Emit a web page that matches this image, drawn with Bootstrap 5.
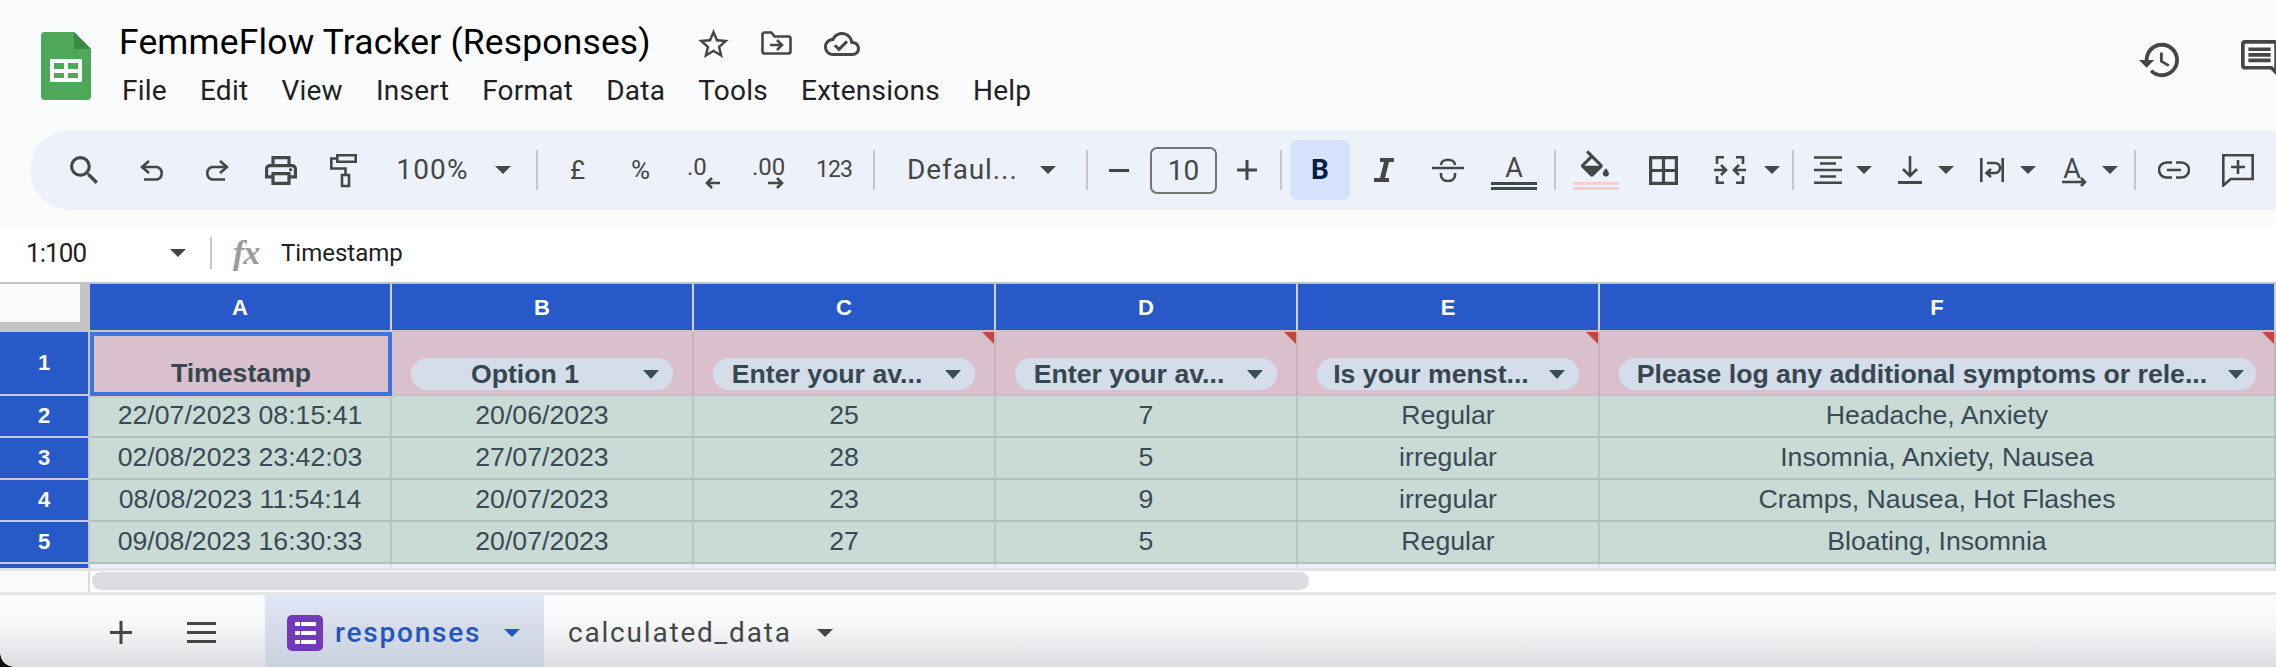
<!DOCTYPE html>
<html lang="en">
<head>
<meta charset="utf-8">
<title>FemmeFlow Tracker (Responses)</title>
<link href="https://cdn.jsdelivr.net/npm/bootstrap@5.3.0/dist/css/bootstrap.min.css" rel="stylesheet">
<style>
html,body{margin:0;width:2276px;height:668px;overflow:hidden;background:#fff;font-family:Roboto,"Liberation Sans",sans-serif;color:#444746}
svg{display:block;flex:none}
.ic{fill:#444746}
.st{fill:none;stroke:#444746;stroke-width:2.6}
.top-area{background:#f9fbfd;height:226px}
.head-row{height:130px;padding:32px 0 0 41px}
.doc-col{margin-left:31px;margin-top:-10px}
.doc-title{font-size:35.4px;line-height:40px;color:#000;white-space:nowrap;margin:0 47px 0 -3px;letter-spacing:.2px}
.doc-icons{gap:32px;margin-top:3px}
.menu-row{gap:33px;font-size:28px;line-height:32px;color:#202124;margin-top:13px;letter-spacing:.25px}
.right-icons{margin-left:auto;margin-top:8px;gap:62px;margin-right:-2px}
.tool-pill{height:80px;margin-left:30px;background:#edf2fa;border-radius:40px 0 0 40px}
.sep{width:2px;height:40px;background:#c7c7c7;flex:none}
.tt{font-size:28px;line-height:32px;color:#444746;text-align:center;flex:none;white-space:nowrap}
.tt-zoom{width:73px;letter-spacing:1.2px}.tt-font{width:105px;letter-spacing:.9px}
.tt-sm{font-size:26px}
.tt-cur{width:13px}.tt-pct{width:21px}.tt-123{width:36px;letter-spacing:-1px;font-size:23px}
.size-box{width:67px;height:47px;border:2px solid #757575;border-radius:7px;line-height:43px}
.bold-btn{width:60px;height:60px;background:#d6e2fb;border-radius:8px;font-weight:700;color:#041e49;line-height:60px}
.caret{width:16px;height:8px;flex:none;border-left:8px solid transparent;border-right:8px solid transparent;border-top:8px solid #444746;box-sizing:border-box}
.sp8{margin-left:8px}.sp12{margin-left:12px}.sp14{margin-left:14px}.sp15{margin-left:15px}.sp16{margin-left:16px}.sp17{margin-left:17px}.sp18{margin-left:18px}.sp20{margin-left:20px}.sp21{margin-left:21px}.sp22{margin-left:22px}.sp23{margin-left:23px}.sp24{margin-left:24px}.sp25{margin-left:25px}.sp26{margin-left:26px}.sp27{margin-left:27px}.sp28{margin-left:28px}.sp30{margin-left:30px}.sp31{margin-left:31px}.sp32{margin-left:32px}.sp33{margin-left:33px}.sp36{margin-left:36px}.sp38{margin-left:38px}.sp39{margin-left:39px}.sp40{margin-left:40px}.sp42{margin-left:42px}.sp47{margin-left:47px}.sp55{margin-left:55px}
.fx-row{height:56px;background:#fff;padding:0 0 2px 26px}
.name-box{width:160px;font-size:26px;color:#202124;line-height:30px;letter-spacing:-.9px}
.fx-sep{width:2px;height:32px;background:#c7c7c7;margin-left:24px}
.fx-mark{font-family:"Liberation Serif",serif;font-style:italic;font-weight:700;font-size:34px;line-height:30px;color:#9b9b9b;margin-left:21px;width:48px;letter-spacing:-1px}
.fx-text{font-size:24px;line-height:30px;color:#202124}
.sheet-grid{display:grid;grid-template-columns:90px 302px 302px 302px 302px 302px 676px;grid-template-rows:48px 64px 42px 42px 42px 42px 4px;border-top:2px solid #c2c2c2;font-family:"Liberation Sans",Arial,sans-serif;font-size:26.67px;color:#384a56}
.corner-cell{background:#c4c4c4;padding:0 10px 10px 0}
.corner-cell>div{background:#f8f9fa;height:100%}
.col-head{background:#2759c8;color:#fff;font-weight:700;font-size:22px;border-right:2px solid #ccd2dc;border-bottom:2px solid #c4c4c4;display:flex;align-items:center;justify-content:center}
.row-head{background:#2759c8;color:#fff;font-weight:700;font-size:22px;border-right:2px solid #c4c4c4;border-bottom:2px solid #c4cbd6;display:flex;align-items:center;justify-content:center;padding-bottom:2px}
.pink-cell{background:#dac0cd;border-right:2px solid #c6b3bd;border-bottom:2px solid #c9bcc4;position:relative;display:flex;align-items:flex-end;justify-content:center;padding-bottom:4px;font-weight:700;white-space:nowrap;color:#35474f}
.sel-cell{box-shadow:inset 0 0 0 4px #3d74e0;border-color:transparent;margin:0 -2px -2px 0;padding-bottom:5px;z-index:2;line-height:36px}
.note-mark{position:absolute;top:0;right:0;width:12px;height:12px;background:#c5443f;clip-path:polygon(0 0,100% 0,100% 100%)}
.filter-chip{height:32px;margin:0 19px;width:262px;background:#d5dcea;border-radius:16px;padding:0 12px 0 16px;line-height:32px}
.filter-wide{width:638px}
.chip-label{width:196px;text-align:center;flex:none;margin-right:20px}
.chip-label-wide{width:575px;margin-right:18px}
.chip-caret{border-top-color:#3b4d58;border-left-width:8px;border-right-width:8px;border-top-width:9px;height:9px}
.data-cell{background:#cadbd5;border-right:2px solid #b6c6c2;border-bottom:2px solid #b0c0bf;display:flex;align-items:center;justify-content:center;white-space:nowrap;padding-bottom:2px}
.spare-cell{background:#e8effb;border-right:2px solid #d7dde6}
.spare-head{background:#2759c8;border-right:2px solid #c4c4c4}
.scroll-strip{height:24px;border-top:3px solid #e3e3e3;background:#fff}
.scroll-left{width:90px;background:#f9fafb;border-right:2px solid #dcdcdc}
.scroll-thumb{width:1217px;height:18px;background:#dadce0;border-radius:9px;margin:1px 0 0 2px}
.tab-bar{height:75px;border-top:3px solid #e5e6e7;background:linear-gradient(#f9fafc,#f7f8fa 40%,#dcdee1);position:relative;padding-left:110px}
.corner-nub{position:absolute;left:0;bottom:0;width:14px;height:14px;background:radial-gradient(circle at 100% 0,transparent 13.5px,#111 14px)}
.tab-on{width:279px;height:100%;margin-left:49px;padding:4px 0 0 22px;background:linear-gradient(#e1e7f4,#c9d0de);color:#2356c0;font-weight:500}
.tab-name{font-size:28px;line-height:32px;white-space:nowrap;letter-spacing:1.8px}
.tab-label{margin-left:12px}
.tab-off{margin-left:24px;color:#444746;padding-top:4px}
.caret-blue{border-top-color:#2356c0;margin-left:23px}
.caret-off{margin-left:25px;margin-top:4px}
.tab-tool{margin-top:2px}
</style>
</head>
<body>
<div class="top-area">
  <div class="head-row d-flex">
    <svg width="50" height="68" viewBox="0 0 50 68"><path fill="#4fa85a" d="M4 0H33L50 17V64a4 4 0 0 1-4 4H4a4 4 0 0 1-4-4V4a4 4 0 0 1 4-4z"/><path fill="#3a8a3f" d="M33 0L50 17H33z"/><path fill="#fff" d="M9 27H41V50H9zM13 31V37H23V31zM27 31V37H37V31zM13 41V46H23V41zM27 41V46H37V41z" fill-rule="evenodd"/></svg>
    <div class="doc-col">
      <div class="d-flex align-items-center">
        <div class="doc-title">FemmeFlow Tracker (Responses)</div>
        <div class="d-flex align-items-center doc-icons">
          <svg width="31" height="29" viewBox="2 2 20 19" class="ic"><path d="M22 9.24l-7.19-.62L12 2 9.19 8.63 2 9.24l5.46 4.73L5.82 21 12 17.27 18.18 21l-1.63-7.03L22 9.24zM12 15.4l-3.76 2.27 1-4.28-3.32-2.88 4.38-.38L12 6.1l1.71 4.04 4.38.38-3.32 2.88 1 4.28L12 15.4z"/></svg>
          <svg width="31" height="25" viewBox="762 32 31 25"><path class="st" d="M763.5 36a2 2 0 0 1 2-2.5h7l3 4h14a2 2 0 0 1 2 2v13a2 2 0 0 1-2 2h-24a2 2 0 0 1-2-2z"/><path class="st" d="M771 46h12M778 41l5 5-5 5"/></svg>
          <svg width="36" height="24" viewBox="0 4 24 16" class="ic"><path d="M19.35 10.04C18.67 6.59 15.64 4 12 4 9.11 4 6.6 5.64 5.35 8.04 2.34 8.36 0 10.91 0 14c0 3.31 2.69 6 6 6h13c2.76 0 5-2.24 5-5 0-2.64-2.05-4.78-4.65-4.96zM19 18H6c-2.21 0-4-1.79-4-4 0-2.05 1.53-3.76 3.56-3.97l1.07-.11.5-.95C8.08 7.14 9.94 6 12 6c2.62 0 4.88 1.86 5.39 4.43l.3 1.5 1.53.11c1.56.1 2.78 1.41 2.78 2.96 0 1.65-1.35 3-3 3zm-9-3.82l-2.09-2.09L6.5 13.5 10 17l6.01-6.01-1.41-1.41z"/></svg>
        </div>
      </div>
      <div class="d-flex menu-row"><span>File</span><span>Edit</span><span>View</span><span>Insert</span><span>Format</span><span>Data</span><span>Tools</span><span>Extensions</span><span>Help</span></div>
    </div>
    <div class="d-flex right-icons align-items-start">
      <svg width="40" height="40" viewBox="1 2 21 20" class="ic"><path d="M13 3c-4.97 0-9 4.03-9 9H1l3.89 3.89.07.14L9 12H6c0-3.87 3.13-7 7-7s7 3.13 7 7-3.13 7-7 7c-1.93 0-3.68-.79-4.94-2.06l-1.42 1.42C8.27 19.99 10.51 21 13 21c4.97 0 9-4.03 9-9s-4.03-9-9-9zm-1 5v5l4.28 2.54.72-1.21-3.5-2.08V8H12z"/></svg>
      <svg width="37" height="37" viewBox="2 2 20 20" class="ic"><path d="M20 2H4c-1.1 0-2 .9-2 2v12c0 1.1.9 2 2 2h14l4 4V4c0-1.1-.9-2-2-2zm0 15.17L18.83 16H4V4h16v13.17zM6 12h12v2H6zm0-3h12v2H6zm0-3h12v2H6z"/></svg>
    </div>
  </div>
  <div class="tool-pill d-flex align-items-center">
    <svg class="ic sp40" width="28" height="28" viewBox="3 3 17.5 17.5"><path d="M15.5 14h-.79l-.28-.27A6.471 6.471 0 0 0 16 9.5 6.5 6.5 0 1 0 9.5 16c1.61 0 3.09-.59 4.23-1.57l.27.28v.79l5 4.99L20.49 19l-4.99-5zm-6 0C7.01 14 5 11.99 5 9.5S7.01 5 9.5 5 14 7.01 14 9.5 11.99 14 9.5 14z"/></svg>
    <svg class="sp42" width="25" height="22" viewBox="0 0 25 22"><path class="st" d="M9 2L2 8l7 6M2 8h15a6.500 6.500 0 0 1 0 12.500H4"/></svg>
    <svg class="sp39" width="25" height="22" viewBox="0 0 25 22"><path class="st" d="M16 2l7 6-7 6M23 8H8a6.500 6.500 0 0 0 0 12.500h13"/></svg>
    <svg class="ic sp36" width="32" height="29" viewBox="2 3 20 18"><path d="M19 8h-1V3H6v5H5c-1.66 0-3 1.34-3 3v6h4v4h12v-4h4v-6c0-1.66-1.34-3-3-3zM8 5h8v3H8V5zm8 12v2H8v-4h8v2zm2-2v-2H6v2H4v-4c0-.55.45-1 1-1h14c.55 0 1 .45 1 1v4h-2z"/><circle cx="18" cy="11.500" r="1"/></svg>
    <svg class="sp33" width="28" height="35" viewBox="329 156 28 35"><path class="st" d="M336.300 158.300h18.400v6.400h-18.400zM336 161.500h-5.700v10h14.200v7"/><path class="st" d="M341 178h7v11h-7z"/></svg>
    <div class="tt tt-zoom sp38">100%</div>
    <div class="caret sp26"></div>
    <div class="sep sp25"></div>
    <div class="tt tt-sm tt-cur sp32">£</div>
    <div class="tt tt-sm tt-pct sp47">%</div>
    <svg class="sp36" width="33" height="44" viewBox="687 148 33 44"><text x="687" y="175" font-family="Roboto,sans-serif" font-size="24" fill="#444746">.0</text><path class="st" d="M720 183h-13M712 178l-5 5 5 5"/></svg>
    <svg class="sp32" width="33" height="44" viewBox="752 148 33 44"><text x="752" y="175" font-family="Roboto,sans-serif" font-size="24" fill="#444746">.00</text><path class="st" d="M768 183h14M777 178l5 5-5 5"/></svg>
    <div class="tt tt-sm tt-123 sp31">123</div>
    <div class="sep sp21"></div>
    <div class="tt tt-font sp32">Defaul...</div>
    <div class="caret sp28"></div>
    <div class="sep sp30"></div>
    <svg class="sp21" width="20" height="3" viewBox="0 0 20 3"><path fill="#444746" d="M0 0h20v3H0z"/></svg>
    <div class="tt size-box sp21">10</div>
    <svg class="sp20" width="20" height="20" viewBox="0 0 20 20"><path fill="#444746" d="M8.500 0h3v8.500H20v3h-8.500V20h-3v-8.500H0v-3h8.500z"/></svg>
    <div class="sep sp23"></div>
    <div class="tt bold-btn sp8">B</div>
    <svg class="sp24" width="20" height="24" viewBox="1374 160 20 24"><path fill="#444746" d="M1380 160h14v4h-5l-4 16h4v4h-15v-4h6l4-16h-4z"/></svg>
    <svg class="sp38" width="32" height="24" viewBox="1432 160 32 24"><path class="st" d="M1432 170h32M1441 167c0-7 14-7 14 0M1441 175v2c0 8 14 8 14 0v-2"/></svg>
    <svg class="sp27" width="46" height="40" viewBox="1491 150 46 40"><text x="1514" y="177" text-anchor="middle" font-family="Roboto,sans-serif" font-size="27" fill="#444746">A</text><path fill="#3b4a49" d="M1491 182h46v3h-46zM1491 187h46v3h-46z"/></svg>
    <div class="sep sp17"></div>
    <svg class="sp17" width="46" height="40" viewBox="0 0 46 40"><svg x="8" y="0" width="28" height="27" viewBox="3 0 18 17" class="ic"><path d="M16.560 8.940L7.620 0 6.210 1.410l2.380 2.380-5.150 5.150c-.59.59-.59 1.540 0 2.120l5.500 5.500c.29.29.68.44 1.060.44s.77-.15 1.060-.44l5.500-5.500c.59-.58.59-1.530 0-2.120zM5.210 10L10 5.210 14.790 10H5.210zM19 11.500s-2 2.170-2 3.500c0 1.100.9 2 2 2s2-.9 2-2c0-1.330-2-3.500-2-3.500z"/></svg><path fill="#f4cfcf" d="M0 32h46v3H0zM0 37h46v3H0z"/></svg>
    <svg class="ic sp30" width="29" height="29" viewBox="3 3 18 18"><path d="M3 3v18h18V3H3zm8 16H5v-6h6v6zm0-8H5V5h6v6zm8 8h-6v-6h6v6zm0-8h-6V5h6v6z"/></svg>
    <svg class="sp36" width="32" height="28" viewBox="1714 158 32 28"><path class="st" d="M1724 159.300h-7v6.700M1717 178v6.700h7M1736 159.300h7v6.700M1743 178v6.700h-7M1714 172h12M1721 167l5 5-5 5M1746 172h-12M1739 167l-5 5 5 5"/></svg>
    <div class="caret sp18"></div>
    <div class="sep sp12"></div>
    <svg class="sp20" width="28" height="28" viewBox="1814 158 28 28"><path class="st" d="M1814 159.500h28M1820 165.500h16M1814 172h28M1820 178.500h16M1814 184.700h28"/></svg>
    <div class="caret sp14"></div>
    <svg class="sp26" width="24" height="28" viewBox="1898 158 24 28"><path class="st" d="M1910 158v20M1903 171l7 7 7-7"/><path fill="#444746" d="M1898 183h24v3h-24z"/></svg>
    <div class="caret sp16"></div>
    <svg class="sp26" width="24" height="24" viewBox="1980 160 24 24"><path class="st" d="M1981.300 160v24M2002.700 160v24M1987 165h8a4 4 0 0 1 0 10h-8M1991 171l-4.500 4 4.500 4"/></svg>
    <div class="caret sp16"></div>
    <svg class="sp26" width="25" height="40" viewBox="2062 150 25 40"><text x="2072" y="178" text-anchor="middle" font-family="Roboto,sans-serif" font-size="27" fill="#444746">A</text><path class="st" d="M2062 182h23M2081 178l4 4-4 4"/></svg>
    <div class="caret sp15"></div>
    <div class="sep sp16"></div>
    <svg class="sp22" width="32" height="18" viewBox="2158 163 32 18"><path class="st" d="M2172 164.500h-5.500a7.500 7.500 0 0 0 0 15h5.500M2176 164.500h5.500a7.500 7.500 0 0 1 0 15h-5.500M2167 172h14"/></svg>
    <svg class="sp32" width="32" height="33" viewBox="2222 156 32 33"><path class="st" d="M2223.300 157.300h29.400v23.700h-22l-7.400 6.500zM2238 162v14M2231 169h14"/></svg>
  </div>
</div>
<div class="fx-row d-flex align-items-center">
  <div class="name-box d-flex align-items-center justify-content-between"><span>1:100</span><div class="caret"></div></div>
  <div class="fx-sep"></div>
  <div class="fx-mark">fx</div>
  <div class="fx-text">Timestamp</div>
</div>
<div class="sheet-grid">
  <div class="corner-cell"><div></div></div>
  <div class="col-head">A</div><div class="col-head">B</div><div class="col-head">C</div><div class="col-head">D</div><div class="col-head">E</div><div class="col-head">F</div>

  <div class="row-head">1</div>
  <div class="pink-cell sel-cell">Timestamp</div>
  <div class="pink-cell"><div class="filter-chip d-flex align-items-center"><span class="chip-label">Option 1</span><div class="caret chip-caret"></div></div></div>
  <div class="pink-cell"><span class="note-mark"></span><div class="filter-chip d-flex align-items-center"><span class="chip-label">Enter your av...</span><div class="caret chip-caret"></div></div></div>
  <div class="pink-cell"><span class="note-mark"></span><div class="filter-chip d-flex align-items-center"><span class="chip-label">Enter your av...</span><div class="caret chip-caret"></div></div></div>
  <div class="pink-cell"><span class="note-mark"></span><div class="filter-chip d-flex align-items-center"><span class="chip-label">Is your menst...</span><div class="caret chip-caret"></div></div></div>
  <div class="pink-cell"><span class="note-mark"></span><div class="filter-chip filter-wide d-flex align-items-center"><span class="chip-label chip-label-wide">Please log any additional symptoms or rele...</span><div class="caret chip-caret"></div></div></div>

  <div class="row-head">2</div><div class="data-cell">22/07/2023 08:15:41</div><div class="data-cell">20/06/2023</div><div class="data-cell">25</div><div class="data-cell">7</div><div class="data-cell">Regular</div><div class="data-cell">Headache, Anxiety</div>
  <div class="row-head">3</div><div class="data-cell">02/08/2023 23:42:03</div><div class="data-cell">27/07/2023</div><div class="data-cell">28</div><div class="data-cell">5</div><div class="data-cell">irregular</div><div class="data-cell">Insomnia, Anxiety, Nausea</div>
  <div class="row-head">4</div><div class="data-cell">08/08/2023 11:54:14</div><div class="data-cell">20/07/2023</div><div class="data-cell">23</div><div class="data-cell">9</div><div class="data-cell">irregular</div><div class="data-cell">Cramps, Nausea, Hot Flashes</div>
  <div class="row-head">5</div><div class="data-cell">09/08/2023 16:30:33</div><div class="data-cell">20/07/2023</div><div class="data-cell">27</div><div class="data-cell">5</div><div class="data-cell">Regular</div><div class="data-cell">Bloating, Insomnia</div>
  <div class="spare-head"></div><div class="spare-cell"></div><div class="spare-cell"></div><div class="spare-cell"></div><div class="spare-cell"></div><div class="spare-cell"></div><div class="spare-cell"></div>
</div>
<div class="scroll-strip d-flex">
  <div class="scroll-left"></div>
  <div class="scroll-thumb"></div>
</div>
<div class="tab-bar d-flex align-items-center">
  <span class="corner-nub"></span>
  <svg class="tab-tool" width="22" height="23" viewBox="0 0 22 23"><path fill="#444746" d="M9.500 0h3v10h9.500v3h-9.500v10h-3V13H0v-3h9.500z"/></svg>
  <svg class="tab-tool sp55" width="29" height="21" viewBox="0 0 29 21"><path fill="#444746" d="M0 0h29v3H0zM0 9h29v3H0zM0 18h29v3H0z"/></svg>
  <div class="tab-on d-flex align-items-center">
    <svg width="36" height="36" viewBox="0 0 36 36"><rect width="36" height="36" rx="5" fill="#7339bb"/><path fill="#fff" d="M8 7h5v4H8zM14 7h15v4H14zM8 16h5v4H8zM14 16h15v4H14zM8 25h5v4H8zM14 25h15v4H14z"/></svg>
    <span class="tab-name tab-label">responses</span>
    <div class="caret caret-blue"></div>
  </div>
  <span class="tab-name tab-off">calculated_data</span>
  <div class="caret caret-off"></div>
</div>
<script src="https://cdn.jsdelivr.net/npm/bootstrap@5.3.0/dist/js/bootstrap.bundle.min.js"></script>
</body>
</html>
